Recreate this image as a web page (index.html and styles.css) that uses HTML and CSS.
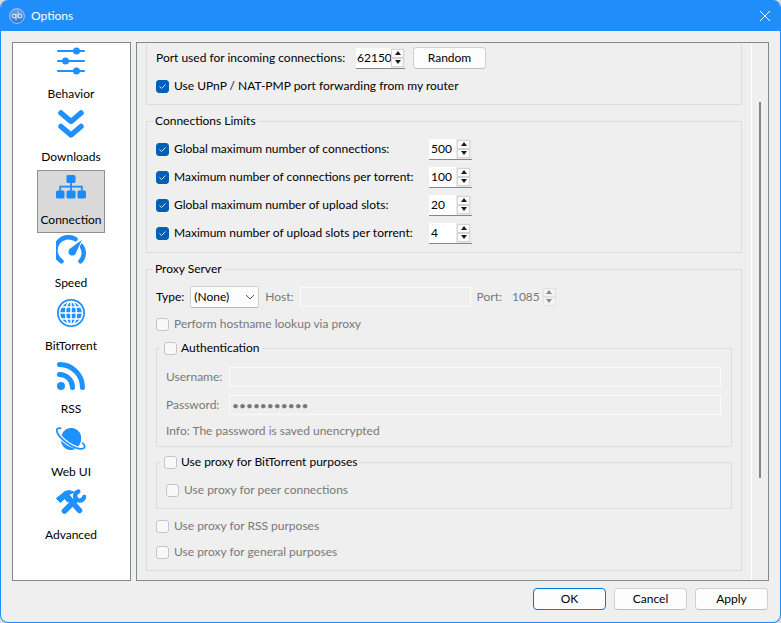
FILE: index.html
```html
<!DOCTYPE html>
<html lang="en">
<head>
<meta charset="utf-8">
<title>Options</title>
<link rel="stylesheet" href="styles.css">
</head>
<body>
<div class="window">
  <header class="titlebar">
    <svg class="logo" viewBox="0 0 16 16" aria-hidden="true">
      <defs><linearGradient id="orb" x1="0" y1="0" x2="0" y2="1"><stop offset="0" stop-color="#6fa3e0"/><stop offset="1" stop-color="#356ebf"/></linearGradient></defs>
      <circle cx="8" cy="8" r="7.4" fill="url(#orb)" stroke="#a3c4ee"/>
      <g fill="none" stroke="#c8e4ff" stroke-width="1.1"><circle cx="5" cy="8" r="1.900"/><path d="M7 5.800v6.700"/><circle cx="11" cy="8" r="1.900"/><path d="M9 3.400v6.700"/></g>
    </svg>
    <h1>Options</h1>
    <button class="close" type="button" aria-label="Close"><svg viewBox="0 0 12 12"><path d="M1 1l10 10M11 1L1 11"/></svg></button>
  </header>
  <div class="main">
    <nav class="sidebar">
      <button class="tab" type="button">
        <svg viewBox="0 0 30 30"><g stroke="#1e90ff" stroke-width="2" stroke-linecap="round"><path d="M2 5h26M2 15h26M2 25h26"/></g><g fill="#1e90ff"><circle cx="20.500" cy="5" r="3.500"/><circle cx="9.500" cy="15" r="3.500"/><circle cx="20.500" cy="25" r="3.500"/></g></svg>
        <span>Behavior</span></button>
      <button class="tab" type="button">
        <svg viewBox="0 0 30 30"><path d="M5 4l10 8.500L25 4M5 17.500L15 26l10-8.500" fill="none" stroke="#1e90ff" stroke-width="5.500" stroke-linecap="round" stroke-linejoin="round"/></svg>
        <span>Downloads</span></button>
      <button class="tab selected" type="button">
        <svg viewBox="0 0 30 30"><g fill="#1e8af5"><rect x="10.500" y="3" width="9" height="8" rx="1.500"/><rect x="0" y="18.500" width="8.500" height="8" rx="1.500"/><rect x="10.500" y="18.500" width="9" height="8" rx="1.500"/><rect x="21.500" y="18.500" width="8.500" height="8" rx="1.500"/></g><path d="M15 10v9M4.200 19v-4.300h21.600V19" fill="none" stroke="#1e8af5" stroke-width="1.800"/></svg>
        <span>Connection</span></button>
      <button class="tab" type="button">
        <svg viewBox="0 0 30 30"><path d="M5.500 26.300A12 12 0 0 1 19.500 4.200M25.500 11A12 12 0 0 1 24.500 26.300" fill="none" stroke="#1e90ff" stroke-width="4.500" stroke-linecap="round"/><path d="M27 3.500L20.200 18.500A4.300 4.300 0 1 1 13.500 13.500Z" fill="#1e90ff" stroke="#fff" stroke-width="1"/></svg>
        <span>Speed</span></button>
      <button class="tab" type="button">
        <svg viewBox="0 0 30 30"><circle cx="15" cy="15" r="14" fill="#1e90ff"/><g fill="none" stroke="#fff" stroke-width="1.500"><circle cx="15" cy="15" r="11.500"/><ellipse cx="15" cy="15" rx="5.500" ry="11.500"/><path d="M15 3v24M3 15h24M5 9h20M5 21h20"/></g></svg>
        <span>BitTorrent</span></button>
      <button class="tab" type="button">
        <svg viewBox="0 0 30 30"><circle cx="5" cy="25" r="4" fill="#1e90ff"/><path d="M3.500 13.500A13 13 0 0 1 16.500 26.500M3.500 3.500A23 23 0 0 1 26.500 26.500" fill="none" stroke="#1e90ff" stroke-width="5" stroke-linecap="round"/></svg>
        <span>RSS</span></button>
      <button class="tab" type="button">
        <svg viewBox="0 0 30 30"><g fill="#1e90ff"><path d="M5.500 11.500A10 10 0 1 1 25 16.500C24.500 19 23.500 21 22.500 22.500C16 20.500 10 16.500 5.500 11.500Z"/><path d="M5 16.500C9 20.500 14 23.500 19.500 25A10 10 0 0 1 5 16.500Z"/></g><path d="M5.500 4.500C2 3.500 0 4.800 1 8C3 14 15 23.500 24 24.800C29 25.300 30.300 22.800 26.300 18.500" fill="none" stroke="#1e90ff" stroke-width="1.800"/></svg>
        <span>Web UI</span></button>
      <button class="tab" type="button">
        <svg viewBox="0 0 30 30"><path d="M8.500 24L20 12.500M13 11.500L23.500 23.500" fill="none" stroke="#1e90ff" stroke-width="5.600" stroke-linecap="round"/><path d="M0.300 11.500L6.500 6.500C9.500 3 14 3 18 5.200L13 7.500L15.500 11.500L11.500 15L8.800 11.500L4.500 15.500Z" fill="#1e90ff" stroke="#1e90ff" stroke-linejoin="round"/><path d="M22.300 4.600A4.600 4.600 0 1 0 28.200 10" fill="none" stroke="#1e90ff" stroke-width="4.400" stroke-linecap="round"/></svg>
        <span>Advanced</span></button>
    </nav>
    <form class="panel" id="options">
      <div class="content">
        <fieldset class="group clipped">
          <div class="row listen">
            <label for="port">Port used for incoming connections:</label>
            <div class="spin port"><input id="port" type="text" value="62150"><button type="button" class="up" aria-label="Increase"></button><button type="button" class="down" aria-label="Decrease"></button></div>
            <button class="btn" type="button">Random</button>
          </div>
          <div class="row"><label class="check"><input type="checkbox" checked>Use UPnP / NAT-PMP port forwarding from my router</label></div>
        </fieldset>
        <fieldset class="group limits">
          <legend>Connections Limits</legend>
          <div class="row"><label class="check"><input type="checkbox" checked>Global maximum number of connections:</label>
            <div class="spin"><input type="text" value="500" aria-label="Global maximum number of connections"><button type="button" class="up" aria-label="Increase"></button><button type="button" class="down" aria-label="Decrease"></button></div></div>
          <div class="row"><label class="check"><input type="checkbox" checked>Maximum number of connections per torrent:</label>
            <div class="spin"><input type="text" value="100" aria-label="Maximum number of connections per torrent"><button type="button" class="up" aria-label="Increase"></button><button type="button" class="down" aria-label="Decrease"></button></div></div>
          <div class="row"><label class="check"><input type="checkbox" checked>Global maximum number of upload slots:</label>
            <div class="spin"><input type="text" value="20" aria-label="Global maximum number of upload slots"><button type="button" class="up" aria-label="Increase"></button><button type="button" class="down" aria-label="Decrease"></button></div></div>
          <div class="row"><label class="check"><input type="checkbox" checked>Maximum number of upload slots per torrent:</label>
            <div class="spin"><input type="text" value="4" aria-label="Maximum number of upload slots per torrent"><button type="button" class="up" aria-label="Increase"></button><button type="button" class="down" aria-label="Decrease"></button></div></div>
        </fieldset>
        <fieldset class="group">
          <legend>Proxy Server</legend>
          <div class="row">
            <label for="type">Type:</label>
            <div class="combo"><select id="type"><option>(None)</option></select><svg viewBox="0 0 10 6"><path d="M1 1l4 4 4-4"/></svg></div>
            <label class="off" for="host">Host:</label>
            <input class="field host" id="host" type="text" disabled>
            <label class="off" for="pport">Port:</label>
            <div class="spin pport"><input id="pport" type="text" value="1085" disabled><button type="button" class="up" aria-label="Increase" disabled></button><button type="button" class="down" aria-label="Decrease" disabled></button></div>
          </div>
          <div class="row short"><label class="check off"><input type="checkbox" disabled>Perform hostname lookup via proxy</label></div>
          <fieldset class="group inner auth">
            <legend class="toggle"><label class="check"><input type="checkbox">Authentication</label></legend>
            <div class="row cred"><label class="off" for="user">Username:</label><input class="field" id="user" type="text" disabled></div>
            <div class="row cred"><label class="off" for="pass">Password:</label><input class="field" id="pass" type="password" value="secretpassw" disabled></div>
            <p class="off">Info: The password is saved unencrypted</p>
          </fieldset>
          <fieldset class="group inner">
            <legend class="toggle"><label class="check"><input type="checkbox">Use proxy for BitTorrent purposes</label></legend>
            <div class="row"><label class="check off"><input type="checkbox" disabled>Use proxy for peer connections</label></div>
          </fieldset>
          <div class="tail">
            <div class="row short"><label class="check off"><input type="checkbox" disabled>Use proxy for RSS purposes</label></div>
            <div class="row short"><label class="check off"><input type="checkbox" disabled>Use proxy for general purposes</label></div>
          </div>
        </fieldset>
      </div>
      <div class="scrollbar"><div class="thumb"></div></div>
    </form>
  </div>
  <footer class="actions">
    <button class="btn primary" type="submit" form="options">OK</button>
    <button class="btn" type="button">Cancel</button>
    <button class="btn" type="button">Apply</button>
  </footer>
</div>
</body>
</html>
```
FILE: styles.css
```css
* { box-sizing: border-box; }

body {
  margin: 0;
  background: #dcdcdc;
  color: #000;
  font: 12px/18px Lato, "Open Sans", sans-serif;
}

button, input, select { font: inherit; color: inherit; margin: 0; }
h1, p { margin: 0; font: inherit; }

.window {
  min-height: 100vh;
  display: flex;
  flex-direction: column;
  border: 1px solid #1f8dfa;
  border-top: 0;
  border-radius: 8px;
  background: #efefef;
  overflow: hidden;
}

.titlebar {
  height: 31px;
  display: flex;
  align-items: center;
  gap: 6px;
  padding: 0 9px 0 8px;
  background: #1f8dfa;
  color: #fff;
}
.logo { width: 16px; height: 16px; }
.close {
  margin-left: auto;
  width: 12px;
  height: 12px;
  padding: 0;
  border: 0;
  background: none;
}
.close svg { display: block; fill: none; stroke: #fff; stroke-width: 1; }

.main {
  flex: 1;
  display: flex;
  gap: 5px;
  padding: 11px 11px 0;
}

.sidebar {
  width: 119px;
  display: flex;
  flex-direction: column;
  align-items: center;
  padding: 1px 1px 0 0;
  border: 1px solid #828790;
  background: #fff;
}
.tab {
  min-width: 68px;
  height: 63px;
  display: flex;
  flex-direction: column;
  align-items: center;
  gap: 9px;
  padding: 1px 2px;
  border: 1px solid transparent;
  background: none;
}
.tab svg { width: 30px; height: 30px; }
.tab.selected { background: #d9d9d9; border-color: #909090; }

.panel {
  flex: 1;
  min-width: 0;
  display: flex;
  border: 1px solid #828790;
}
.content { flex: 1; min-width: 0; padding: 1px 9px 9px; }

.scrollbar {
  width: 17px;
  padding: 59px 0 0 7px;
  border-left: 1px solid #fff;
}
.thumb { width: 2px; height: 376px; background: #858585; }

.group {
  min-width: 0;
  margin: 7px 0 0;
  padding: 5px 9px;
  border: 1px solid #dcdcdc;
}
.group.clipped { margin: 0; padding: 0 9px 4px; border-top: 0; }
.group.inner { margin-top: 2px; padding-bottom: 4px; }
.group.inner.auth { padding: 6px 10px 4px 9px; }
.group.inner + .inner { margin-top: 6px; }
.tail { margin-top: 4px; }

legend { margin-left: -3px; padding: 0 2px; }
legend.toggle { margin-left: -6px; padding: 0 2px 0 4px; }

.row { display: flex; align-items: center; height: 28px; gap: 6px; white-space: nowrap; }
.row.short { height: 26px; }
.row.listen { gap: 8px; }
.row.listen label { width: 192px; }
.off { color: #787878; }
.inner p { height: 23px; line-height: 23px; }

.check { display: flex; align-items: center; gap: 5px; }
.toggle .check { gap: 4px; }
.check input {
  appearance: none;
  flex: none;
  width: 13px;
  height: 13px;
  border: 1px solid #c4c4c4;
  border-radius: 3px;
  background: #f9f9f9;
}
.check input:checked {
  border-color: #005fb8;
  background: #005fb8 url("data:image/svg+xml,%3Csvg xmlns='http://www.w3.org/2000/svg' viewBox='0 0 11 11'%3E%3Cpath d='M2.500 5.500l2 2 4-4' fill='none' stroke='%23cfe4f7' stroke-width='1'/%3E%3C/svg%3E");
}
.limits .check { width: 267px; }

.spin {
  width: 43px;
  height: 21px;
  display: grid;
  grid-template: 9px 9px / 1fr 13px;
  column-gap: 1px;
  padding: 1px 2px 0 0;
  border-bottom: 1px solid #868686;
  background: #eaeaea;
}
.spin input {
  grid-row: 1 / 3;
  min-width: 0;
  width: 100%;
  height: 20px;
  margin-top: -1px;
  padding: 0 0 0 2px;
  border: 0;
  background: #fff;
}
.spin.port { width: 49px; column-gap: 0; padding-right: 1px; }
.spin.port input { padding-left: 1px; }
.spin button {
  display: flex;
  align-items: center;
  justify-content: center;
  padding: 0;
  border: 1px solid #d4d4d4;
  background: #fdfdfd;
}
.spin button::before {
  content: "";
  border: 3px solid transparent;
}
.spin .up::before { border-top: 0; border-bottom: 4px solid #1a1a1a; }
.spin .down::before { border-bottom: 0; border-top: 4px solid #1a1a1a; }
.spin.pport { width: 50px; border-color: transparent; background: none; }
.spin.pport input { padding-left: 4px; }
.spin input:disabled { background: none; color: #787878; }
.spin button:disabled { background: #f3f3f3; border-color: #e2e2e2; }
.spin .up:disabled::before { border-bottom-color: #8a8a8a; }
.spin .down:disabled::before { border-top-color: #8a8a8a; }

.btn {
  width: 73px;
  height: 22px;
  padding: 0;
  border: 1px solid #d0d0d0;
  border-bottom-color: #bdbdbd;
  border-radius: 4px;
  background: #fdfdfd;
}
.btn.primary { border-color: #0078d4; }

.combo { position: relative; }
.combo select {
  display: block;
  appearance: none;
  width: 69px;
  height: 22px;
  padding: 0 4px 0 3px;
  border: 1px solid #d0d0d0;
  border-bottom-color: #b8b8b8;
  border-radius: 2px;
  background: #fdfdfd;
}
.combo svg {
  position: absolute;
  right: 4px;
  top: 8px;
  width: 10px;
  height: 6px;
  fill: none;
  stroke: #555;
  pointer-events: none;
}

.field {
  height: 20px;
  min-width: 0;
  padding: 0 2px;
  border: 1px solid #fbfbfb;
  background: #efefef;
}
.field:disabled { color: #787878; }
.field.host { width: 171px; }
.cred label { width: 57px; }
.cred .field { flex: 1; }

.actions {
  display: flex;
  justify-content: flex-end;
  gap: 8px;
  padding: 7px 12px 12px;
}
```
